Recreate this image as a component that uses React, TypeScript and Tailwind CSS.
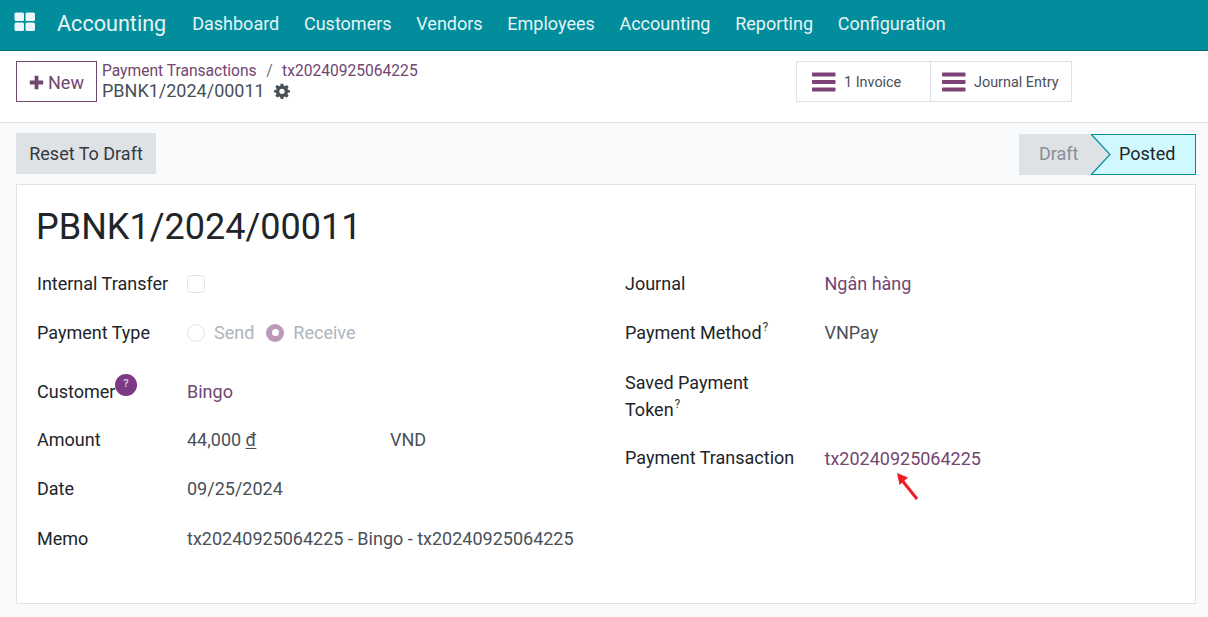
import React from "react";

const P = "text-[#71466f]";
const Row = ({ h, label, children }: { h: string; label: React.ReactNode; children?: React.ReactNode }) => (
  <div className={`flex items-center ${h}`}>
    <div className="w-[150px] shrink-0 text-[#212529]">{label}</div>
    <div className="flex-1 flex items-center">{children}</div>
  </div>
);
const Bars = () => (
  <svg width="24" height="20" viewBox="0 0 24 20" className="shrink-0">
    <rect x="0" y="0.5" width="23.5" height="4" rx="0.8" fill="#7c4277" />
    <rect x="0" y="8" width="23.5" height="4" rx="0.8" fill="#7c4277" />
    <rect x="0" y="15.5" width="23.5" height="4" rx="0.8" fill="#7c4277" />
  </svg>
);
const Sup = () => <sup className="text-[12px] text-[#343a40] ml-[1px] relative top-[-1px] leading-none align-super">?</sup>;

export default function App() {
  return (
    <div className="w-[1208px] h-[617px] overflow-hidden bg-[#f9fafb] flex flex-col text-[18px] text-[#495057]" style={{ fontFamily: "Roboto, sans-serif" }}>
      <nav className="h-[51px] pb-[2px] bg-[#018d9c] border-b border-[#016d78] flex items-center text-white shrink-0">
        <svg width="22" height="20" viewBox="0 0 22 20" className="ml-[14px] mb-[4px]">
          <rect x="0.5" y="0.5" width="9.5" height="8.5" rx="1.5" fill="#eaf6f7" />
          <rect x="11.5" y="0.5" width="9.5" height="8.5" rx="1.5" fill="#eaf6f7" />
          <rect x="0.5" y="10.5" width="9.5" height="8.5" rx="1.5" fill="#eaf6f7" />
          <rect x="11.5" y="10.5" width="9.5" height="8.5" rx="1.5" fill="#eaf6f7" />
        </svg>
        <span className="ml-[21px] text-[21.6px] text-[#e6f4f5]">Accounting</span>
        <div className="ml-[26px] mb-[2px] flex gap-[24.7px] text-[#e6f4f5] text-[18px]">
          <span>Dashboard</span>
          <span>Customers</span>
          <span>Vendors</span>
          <span>Employees</span>
          <span>Accounting</span>
          <span>Reporting</span>
          <span>Configuration</span>
        </div>
      </nav>

      <header className="h-[72px] bg-white border-b border-[#dee2e6] flex items-start pl-[16px] pr-[136px] shrink-0">
        <button className={`mt-[10px] w-[81px] h-[41px] pt-[1px] border border-[#71466f] flex items-center justify-center gap-[4px] ${P}`}>
          <svg width="15" height="15" viewBox="0 0 15 15"><path d="M5.6 0.8h3.8v4.8h4.8v3.8H9.4v4.8H5.6V9.4H0.8V5.6h4.8z" fill="#71466f" /></svg>
          <span className="text-[18px]">New</span>
        </button>
        <div className="ml-[5px] mt-[11px] flex flex-col">
          <div className="text-[15.6px] leading-[19px] whitespace-nowrap">
            <span className={P}>Payment Transactions</span>
            <span className="text-[#6c757d] mx-[9.5px]">/</span>
            <span className={P}>tx20240925064225</span>
          </div>
          <div className="flex items-center leading-[20px] text-[18px] whitespace-nowrap">
            PBNK1/2024/00011
            <svg width="16" height="16" viewBox="0 0 24 24" className="ml-[9px]" fill="#495057">
              <path fillRule="evenodd" d="M10 1h4l.6 3.1 1.9.8 2.7-1.8 2.8 2.8-1.8 2.7.8 1.9L24 11v3l-3.1.6-.8 1.9 1.8 2.7-2.8 2.8-2.7-1.8-1.9.8L14 24h-4l-.6-3.1-1.9-.8-2.7 1.8L2 19.1l1.8-2.7-.8-1.9L0 14v-3l3.1-.6.8-1.9L2 5.8 4.800 3l2.700 1.800 1.900-.8zM12 8.500a4 4 0 1 0 0 8 4 4 0 0 0 0-8z" />
            </svg>
          </div>
        </div>
        <div className="ml-auto mt-[10px] flex h-[41px] border border-[#dee2e6] text-[14.4px] text-[#495057]">
          <div className="w-[134px] flex items-center pl-[15px] gap-[8px] border-r border-[#dee2e6]"><Bars /><span className="pt-[2px]">1 Invoice</span></div>
          <div className="w-[140px] flex items-center pl-[11px] gap-[8px]"><Bars /><span className="pt-[2px]">Journal Entry</span></div>
        </div>
      </header>

      <div className="flex items-start justify-between pl-[16px] pr-[12px] h-[61px] pt-[10px] shrink-0">
        <button className="w-[140px] h-[41px] bg-[#dee2e6] text-[#343a40] text-[18px]">Reset To Draft</button>
        <div className="flex h-[41px] mt-[1px]">
          <div className="w-[72px] pb-[2px] bg-[#dee2e6] text-[#868e96] flex items-center pl-[20px]">Draft</div>
          <div className="relative w-[105px] pb-[2px] bg-[#cff9fe] border border-[#018d9c] border-l-0 text-[#212529] flex items-center pl-[28px]">
            Posted
            <svg width="20" height="41" viewBox="0 0 20 41" className="absolute left-0 top-[-1px]">
              <path d="M0 0 L19 20.500 L0 41 Z" fill="#dee2e6" />
              <path d="M0 0 L19 20.500 L0 41" fill="none" stroke="#018d9c" strokeWidth="1.200" />
            </svg>
          </div>
        </div>
      </div>

      <main className="ml-[16px] w-[1180px] h-[420px] bg-white border border-[#dee2e6] pl-[19px] pt-[18px] shrink-0">
        <h1 className="text-[36px] leading-[48px] text-[#212529]">PBNK1/2024/00011</h1>
        <div className="flex mt-[8px] pl-[1px]">
          <div className="w-[588px] shrink-0 flex flex-col">
            <Row h="h-[49px]" label="Internal Transfer">
              <span className="w-[18px] h-[18px] rounded-[4px] border border-[#dee2e6] bg-white" />
            </Row>
            <Row h="h-[49px]" label="Payment Type">
              <span className="w-[18px] h-[18px] rounded-full border border-[#dee2e6] bg-white" />
              <span className="ml-[9px] text-[#adb5bd]">Send</span>
              <span className="ml-[12px] w-[18px] h-[18px] rounded-full bg-[#bb9ab9] flex items-center justify-center">
                <span className="w-[7px] h-[7px] rounded-full bg-white" />
              </span>
              <span className="ml-[9px] text-[#adb5bd]">Receive</span>
            </Row>
            <Row h="h-[58px]" label={
              <span className="relative inline-block pt-[10px]">
                Customer
                <span className="absolute left-[78px] top-[6px] w-[22px] h-[22px] rounded-full bg-[#7c3a85] text-[#e5cfe5] text-[11px] font-medium flex items-center justify-center">?</span>
              </span>
            }>
              <span className={`${P} pt-[10px]`}>Bingo</span>
            </Row>
            <Row h="h-[49px]" label="Amount">
              <span className="w-[203px] inline-block">44,000 <span className="underline underline-offset-2">đ</span></span>
              <span>VND</span>
            </Row>
            <Row h="h-[49px]" label="Date">09/25/2024</Row>
            <Row h="h-[50px]" label="Memo"><span className="whitespace-nowrap">tx20240925064225 - Bingo - tx20240925064225</span></Row>
          </div>
          <div className="flex-1 flex flex-col">
            <div className="flex items-center h-[49px]">
              <div className="w-[199.5px] text-[#212529]">Journal</div>
              <span className={P}>Ngân hàng</span>
            </div>
            <div className="flex items-center h-[49px]">
              <div className="w-[199.5px] text-[#212529]">Payment Method<Sup /></div>
              <span>VNPay</span>
            </div>
            <div className="h-[89px] pt-[12px] w-[170px] text-[#212529] leading-[27px]">
              Saved Payment<br />Token<Sup />
            </div>
            <div className="flex items-center h-[25px] relative">
              <div className="w-[199.5px] pb-[2px] text-[#212529]">Payment Transaction</div>
              <span className={P}>tx20240925064225</span>
              <svg width="26" height="34" viewBox="0 0 26 34" className="absolute left-[269px] top-[22px]">
                <path d="M23 31 L7 11" stroke="#ee1c25" strokeWidth="3" fill="none" />
                <path d="M3 5 L14 9.500 L5.500 17 Z" fill="#ee1c25" />
              </svg>
            </div>
          </div>
        </div>
      </main>
    </div>
  );
}
